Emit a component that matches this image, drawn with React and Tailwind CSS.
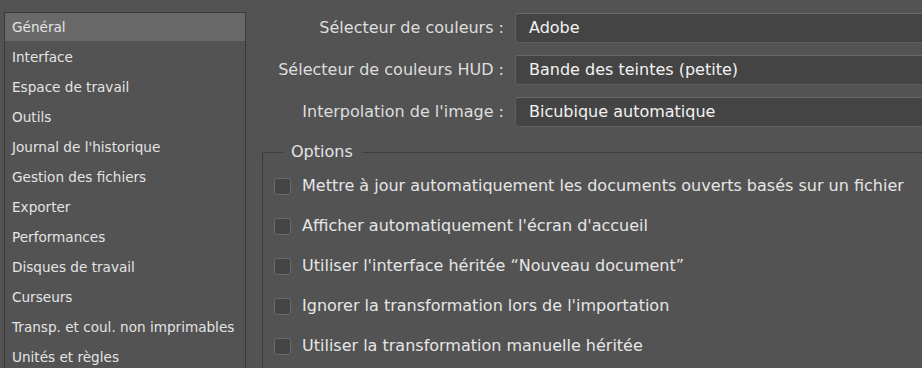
import React from 'react';

const NAV = [
  'Général',
  'Interface',
  'Espace de travail',
  'Outils',
  "Journal de l'historique",
  'Gestion des fichiers',
  'Exporter',
  'Performances',
  'Disques de travail',
  'Curseurs',
  'Transp. et coul. non imprimables',
  'Unités et règles',
];

const SELECTS = [
  { label: 'Sélecteur de couleurs :', value: 'Adobe' },
  { label: 'Sélecteur de couleurs HUD :', value: 'Bande des teintes (petite)' },
  { label: "Interpolation de l'image :", value: 'Bicubique automatique' },
];

const OPTIONS = [
  'Mettre à jour automatiquement les documents ouverts basés sur un fichier',
  "Afficher automatiquement l'écran d'accueil",
  "Utiliser l'interface héritée “Nouveau document”",
  "Ignorer la transformation lors de l'importation",
  'Utiliser la transformation manuelle héritée',
];

function Sidebar() {
  return (
    <div className="ml-[4px] mt-[12px] w-[242px] h-[380px] shrink-0 border border-[#3a3a3a]">
      {NAV.map((item, i) => (
        <div
          key={item}
          className={`h-[28px] mb-[2px] pl-[7px] pt-[1px] flex items-center text-[13.6px] text-[#e4e4e4] whitespace-nowrap ${i === 0 ? 'bg-[#696969]' : ''}`}
        >
          {item}
        </div>
      ))}
    </div>
  );
}

function Checkbox() {
  return <div className="w-[17px] h-[17px] shrink-0 rounded-[3px] bg-[#444444] border border-[#6b6b6b]" />;
}

export default function App() {
  return (
    <div
      className="w-[922px] h-[368px] overflow-hidden bg-[#535353] flex"
      style={{ fontFamily: '"DejaVu Sans", sans-serif' }}
    >
      <Sidebar />

      <div className="flex-1 min-w-0 ml-[16px] flex flex-col">
        <div className="mt-[13px] flex flex-col gap-[12px]">
          {SELECTS.map(s => (
            <div key={s.label} className="flex items-center">
              <div className="w-[242px] shrink-0 text-right text-[16px] text-[#dedede] whitespace-nowrap">{s.label}</div>
              <div className="ml-[11px] -mr-[20px] flex-1 h-[30px] rounded-[3px] bg-[#444444] border border-[#5e5e5e] border-t-[#686868] pl-[13px] flex items-center text-[16px] text-[#f2f2f2] whitespace-nowrap">
                {s.value}
              </div>
            </div>
          ))}
        </div>

        <fieldset className="mt-[15px] -mr-[20px] h-[300px] border-l border-t border-[#3d3d3d] pl-[11px] pt-[4px]">
          <legend className="ml-[9px] pl-[8px] pr-[10px] text-[16px] leading-[20px] text-[#e4e4e4]">Options</legend>
          {OPTIONS.map(o => (
            <div key={o} className="h-[40px] flex items-center gap-[11px]">
              <Checkbox />
              <span className="text-[16px] text-[#e6e6e6] whitespace-nowrap">{o}</span>
            </div>
          ))}
        </fieldset>
      </div>
    </div>
  );
}
